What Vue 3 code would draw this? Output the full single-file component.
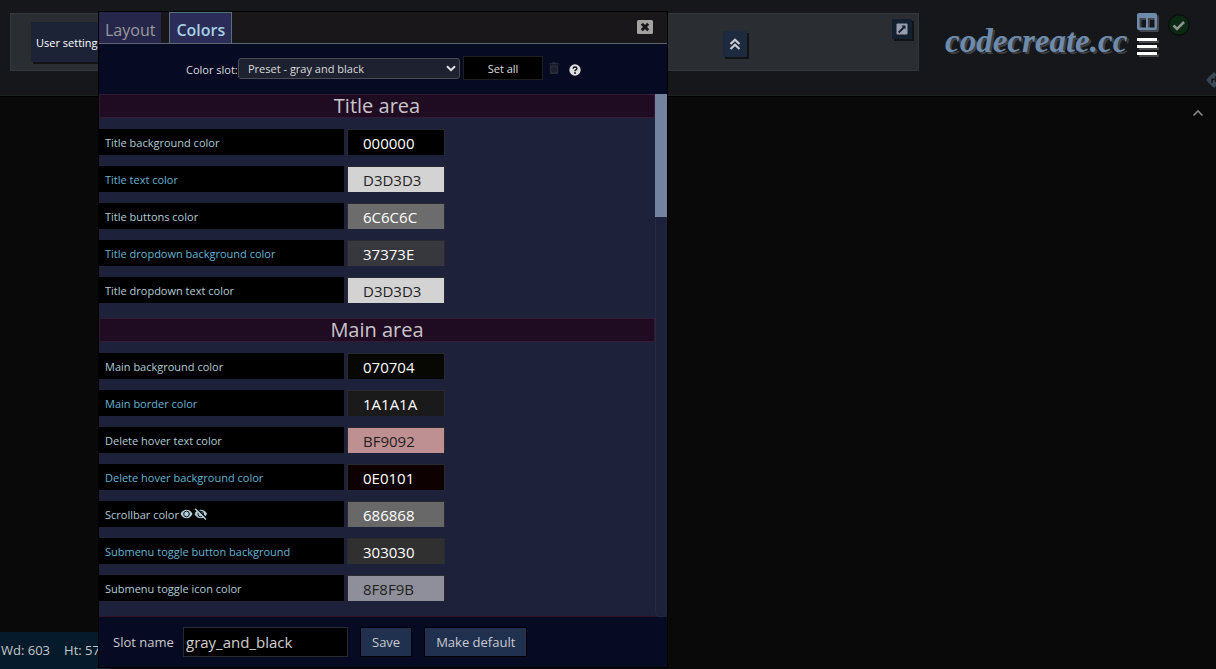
<script setup>
import { ref } from 'vue'

const slots = ['Preset - gray and black']
const slot = ref(slots[0])
const slotName = ref('gray_and_black')

const sections = ref([
  {
    title: 'Title area',
    rows: [
      { id: 'title-bg', label: 'Title background color', value: '000000' },
      { id: 'title-text', label: 'Title text color', value: 'D3D3D3', dark: true },
      { id: 'title-buttons', label: 'Title buttons color', value: '6C6C6C' },
      { id: 'title-dd-bg', label: 'Title dropdown background color', value: '37373E' },
      { id: 'title-dd-text', label: 'Title dropdown text color', value: 'D3D3D3', dark: true },
    ],
  },
  {
    title: 'Main area',
    rows: [
      { id: 'main-bg', label: 'Main background color', value: '070704' },
      { id: 'main-border', label: 'Main border color', value: '1A1A1A' },
      { id: 'del-text', label: 'Delete hover text color', value: 'BF9092', dark: true },
      { id: 'del-bg', label: 'Delete hover background color', value: '0E0101' },
      { id: 'scrollbar', label: 'Scrollbar color', value: '686868', eyes: true },
      { id: 'sub-bg', label: 'Submenu toggle button background', value: '303030' },
      { id: 'sub-icon', label: 'Submenu toggle icon color', value: '8F8F9B', dark: true },
    ],
  },
])
</script>

<template>
  <div class="page">
    <header class="header">
      <div class="toolbar">
        <button class="user-settings" type="button">User settings</button>
        <button class="collapse" type="button" aria-label="Collapse">
          <svg width="12" height="12" viewBox="0 0 12 12">
            <path d="M1.5 6 6 1.8 10.500 6M1.500 11 6 6.800 10.500 11" fill="none" stroke="#c9ccd3" stroke-width="2.200" />
          </svg>
        </button>
        <button class="popout" type="button" aria-label="Open in window">
          <svg width="12" height="12" viewBox="0 0 12 12">
            <rect x="0.500" y="0.500" width="11" height="11" rx="1" fill="#9a9eac" />
            <path d="M5.500 2.500h4v4L8.300 5.300 3.400 10.200 2 8.800 6.800 3.900Z" fill="#12202f" />
          </svg>
        </button>
      </div>
      <a class="logo" href="#">codecreate.cc</a>
      <div class="menu-icons">
        <button class="bare" type="button" aria-label="Columns">
          <svg class="shade" width="20" height="17" viewBox="0 0 20 17">
            <path fill-rule="evenodd" d="M2 0H18a2 2 0 0 1 2 2V15a2 2 0 0 1-2 2H2a2 2 0 0 1-2-2V2A2 2 0 0 1 2 0ZM2.500 5V14.500H9V5ZM11 5V14.500H17.500V5Z" fill="#6f8bab" />
          </svg>
        </button>
        <button class="bare" type="button" aria-label="Menu">
          <svg class="shade" width="20" height="18" viewBox="0 0 20 18">
            <path d="M0 0H20V3H0ZM0 7H20V10H0ZM0 14H20V17H0Z" fill="#fff" />
          </svg>
        </button>
      </div>
      <svg class="status" width="22" height="22" viewBox="0 0 22 22">
        <circle cx="11" cy="11" r="10.200" fill="#0b2912" stroke="#060a08" />
        <path d="M5.500 11.500 9 15 16 8" fill="none" stroke="#8d9490" stroke-width="2.500" />
      </svg>
      <svg class="direction" width="16" height="16" viewBox="0 0 16 16">
        <path d="M8 0.500 15.500 8 8 15.500 0.500 8Z" fill="#3c4856" stroke="#3c4856" stroke-linejoin="round" />
        <path d="M6 11V7.200H11M9 4.500 11.500 7 9 9.500" fill="none" stroke="#15171b" stroke-width="1.600" />
      </svg>
    </header>

    <main class="canvas">
      <svg class="up" width="12" height="8" viewBox="0 0 12 8">
        <path d="M1.500 6.500 6 2 10.500 6.500" fill="none" stroke="#85858a" stroke-width="1.700" />
      </svg>
    </main>

    <footer class="statusbar"><span>Wd: 603</span><span>Ht: 57</span></footer>

    <section class="dialog" aria-label="User settings">
      <nav class="tabs">
        <button class="tab" type="button">Layout</button>
        <button class="tab active" type="button">Colors</button>
        <button class="close" type="button" aria-label="Close">
          <svg width="16" height="14" viewBox="0 0 16 14">
            <rect width="16" height="14" rx="1.500" fill="#a3a3a1" />
            <path d="M4.800 3.800 11.200 10.200M11.200 3.800 4.800 10.200" stroke="#1b181b" stroke-width="3" />
          </svg>
        </button>
      </nav>

      <div class="slotbar">
        <label for="slot">Color slot:</label>
        <div class="select-wrap">
          <select id="slot" v-model="slot">
            <option v-for="s in slots" :key="s">{{ s }}</option>
          </select>
          <svg class="chevron" width="10" height="7" viewBox="0 0 10 7">
            <path d="M1 1.200 5 5.200 9 1.200" fill="none" stroke="#e4e4e4" stroke-width="2" />
          </svg>
        </div>
        <button class="set-all" type="button">Set all</button>
        <button class="bare trash" type="button" aria-label="Delete slot">
          <svg width="10" height="12" viewBox="0 0 10 12">
            <path d="M0 1.200H3L3.600 0.300H6.400L7 1.200H10V2.400H0ZM0.800 3.200H9.200V11a1 1 0 0 1-1 1H1.800a1 1 0 0 1-1-1Z" fill="#2b2d38" />
            <path d="M3 4.800V10.300M5 4.800V10.300M7 4.800V10.300" stroke="#080b22" stroke-width="0.800" />
          </svg>
        </button>
        <button class="bare help" type="button" aria-label="Help">
          <svg width="12" height="12" viewBox="0 0 12 12">
            <circle cx="6" cy="6" r="5.700" fill="#dedede" />
            <path d="M4.100 4.700C4.200 2.500 7.900 2.500 7.900 4.600 7.900 6 6 5.900 6 7.200" fill="none" stroke="#080b22" stroke-width="1.400" />
            <circle cx="6" cy="9" r="0.900" fill="#080b22" />
          </svg>
        </button>
      </div>

      <div class="scroller">
        <div class="list">
          <section v-for="sec in sections" :key="sec.title" class="group">
            <h2>{{ sec.title }}</h2>
            <div v-for="row in sec.rows" :key="row.id" class="row">
              <label :for="row.id">
                {{ row.label }}
                <svg v-if="row.eyes" width="28" height="12" viewBox="0 0 28 12">
                  <path d="M0.500 6C3 0.400 10 0.400 12.500 6 10 11.600 3 11.600 0.500 6Z" fill="#b0ccd6" />
                  <circle cx="6.500" cy="6" r="2.800" fill="none" stroke="#000" stroke-width="0.900" />
                  <path d="M14.500 6C17 0.400 24.500 0.400 27 6 24.500 11.600 17 11.600 14.500 6Z" fill="#b0ccd6" />
                  <circle cx="20.700" cy="6" r="2.800" fill="none" stroke="#000" stroke-width="0.900" />
                  <path d="M16 0 27 10.500" stroke="#000" stroke-width="1.400" />
                  <path d="M15 0.800 26 11.500" stroke="#b0ccd6" stroke-width="1.500" />
                </svg>
              </label>
              <input
                :id="row.id"
                v-model="row.value"
                type="text"
                :class="{ dark: row.dark }"
                :style="{ backgroundColor: '#' + row.value }"
              />
            </div>
          </section>
        </div>
        <div class="track"><div class="thumb"></div></div>
      </div>

      <div class="actions">
        <label for="slot-name">Slot name</label>
        <input id="slot-name" v-model="slotName" type="text" />
        <button type="button">Save</button>
        <button type="button">Make default</button>
      </div>
    </section>
  </div>
</template>

<style>
body {
  background: #090909;
}
</style>

<style scoped>
* {
  box-sizing: border-box;
}
.page {
  position: relative;
  display: flex;
  flex-direction: column;
  height: 100vh;
  overflow: hidden;
  font-family: "Open Sans", "Noto Sans", sans-serif;
  background: #090909;
}
button,
input,
select {
  font-family: inherit;
  margin: 0;
}
.bare {
  display: flex;
  padding: 0;
  border: 0;
  background: none;
}
.header {
  position: relative;
  display: flex;
  align-items: flex-start;
  height: 96px;
  padding: 13px 26px 0 10px;
  background: #15171a;
  border-bottom: 1px solid #18221f;
  box-shadow: 0 1px 0 #000;
}
.toolbar {
  position: relative;
  display: flex;
  flex: 1;
  align-items: center;
  height: 58px;
  padding-left: 20px;
  background: #2a2d31;
  border: 1px solid #34373a;
}
.user-settings {
  width: 90px;
  height: 40px;
  padding: 0 5px;
  border: 0;
  background: #1d2336;
  box-shadow: 2px 2px 0 #121315;
  color: #fff;
  font-size: 11px;
  text-align: left;
  white-space: nowrap;
}
.collapse {
  display: flex;
  align-items: center;
  justify-content: center;
  width: 24px;
  height: 26px;
  margin: 4px 171px 0 auto;
  padding: 0;
  border: 0;
  background: #1e2a3d;
  box-shadow: 2px 2px 0 #121315;
}
.popout {
  position: absolute;
  top: 5px;
  right: 6px;
  display: flex;
  align-items: center;
  justify-content: center;
  width: 20px;
  height: 20px;
  padding: 0;
  border: 0;
  background: #12202f;
  box-shadow: 2px 2px 0 #121315;
}
.logo {
  margin: 10px 0 0 26px;
  width: 192px;
  color: #6f8bab;
  font-family: "Liberation Serif", serif;
  font-size: 33px;
  font-style: italic;
  font-weight: bold;
  line-height: 36px;
  text-decoration: none;
  text-shadow: 2px 2px 0 #3d3f43;
  white-space: nowrap;
}
.menu-icons {
  display: flex;
  flex-direction: column;
  gap: 8px;
}
.shade {
  filter: drop-shadow(2px 2px 0 #45464a);
}
.status {
  margin: 1px 0 0 11px;
}
.direction {
  position: absolute;
  top: 72px;
  right: -6px;
}
.canvas {
  display: flex;
  flex: 1;
  justify-content: flex-end;
  padding: 13px 12px;
}
.statusbar {
  display: flex;
  gap: 14px;
  height: 37px;
  width: 110px;
  padding-left: 1px;
  background: #051a2b;
  color: #c4c6c8;
  font-size: 13px;
  line-height: 36px;
  white-space: nowrap;
}
.dialog {
  position: absolute;
  top: 11px;
  bottom: 1px;
  left: 98px;
  display: flex;
  flex-direction: column;
  width: 570px;
  border: 1px solid #000;
  background: #060a22;
}
.tabs {
  display: flex;
  flex: none;
  gap: 8px;
  height: 32px;
  background: #1a171a;
  border-bottom: 1px solid #5d6670;
}
.tab {
  height: 31px;
  padding: 4px 6px 0;
  border: 0;
  background: #26264a;
  color: #9a9a9c;
  font-size: 16px;
}
.tab.active {
  border: 1px solid #53707c;
  border-bottom: 0;
  background: #2c2c58;
  color: #a5d0e2;
  font-weight: 600;
}
.close {
  display: flex;
  margin: 8px 14px 0 auto;
  padding: 0;
  border: 0;
  background: none;
}
.slotbar {
  display: flex;
  flex: none;
  align-items: center;
  height: 50px;
  padding: 0 0 2px 87px;
  color: #dcdcdc;
  font-size: 11px;
}
.slotbar label {
  width: 52px;
  padding-top: 2px;
  white-space: nowrap;
}
.select-wrap {
  position: relative;
  display: flex;
}
.select-wrap select {
  width: 222px;
  height: 21px;
  padding: 0 9px;
  appearance: none;
  border: 1px solid #4b4c52;
  border-radius: 3px;
  background: #1e2130;
  color: #dcdcdc;
  font-size: 11px;
}
.chevron {
  position: absolute;
  top: 7px;
  right: 4px;
  pointer-events: none;
}
.set-all {
  width: 80px;
  height: 24px;
  margin-left: 3px;
  border: 1px solid #1f1f1f;
  background: #000;
  color: #dcdcdc;
  font-size: 11px;
}
.trash {
  margin-left: 6px;
}
.help {
  margin: 4px 0 0 10px;
}
.scroller {
  display: flex;
  flex: 1;
  min-height: 0;
  background: #1d2139;
}
.list {
  flex: 1;
  overflow: hidden;
  border-bottom: 1px solid #341329;
}
.group {
  display: flex;
  flex-direction: column;
  gap: 11px;
  padding-bottom: 15px;
}
h2 {
  height: 24px;
  margin: 0;
  border: 1px solid #351a36;
  background: #200c22;
  color: #c9c5ca;
  font-size: 20px;
  font-weight: 400;
  line-height: 22px;
  text-align: center;
}
.row {
  display: flex;
  gap: 3px;
  height: 26px;
}
.row label {
  display: flex;
  align-items: center;
  gap: 1px;
  width: 245px;
  padding: 0 6px;
  background: #000;
  color: #b0ccd6;
  font-size: 11px;
}
.row:nth-child(odd) label {
  color: #66b4d2;
}
.row input {
  width: 98px;
  padding: 1px 0 0 15px;
  border: 1px solid #292a2d;
  border-bottom-width: 0;
  color: #fff;
  font-size: 15px;
}
.row input.dark {
  color: #1f1f1f;
}
.track {
  width: 12px;
  border: 1px solid #222a45;
  border-width: 0 1px 1px;
  border-radius: 0 0 5px 5px;
}
.thumb {
  width: 12px;
  height: 123px;
  margin-left: -1px;
  background: #73839f;
}
.actions {
  display: flex;
  flex: none;
  align-items: center;
  gap: 12px;
  height: 50px;
  padding-left: 14px;
  color: #c9cace;
  font-size: 13px;
}
.actions label {
  width: 58px;
  white-space: nowrap;
}
.actions input {
  width: 165px;
  height: 30px;
  padding: 0 2px;
  border: 1px solid #2a2a2c;
  background: #000;
  color: #cfcfcf;
  font-size: 15px;
}
.actions button {
  height: 30px;
  padding: 0 11px;
  border: 1px solid #000;
  background: #203150;
  color: #c9cace;
  font-size: 13px;
}
</style>
